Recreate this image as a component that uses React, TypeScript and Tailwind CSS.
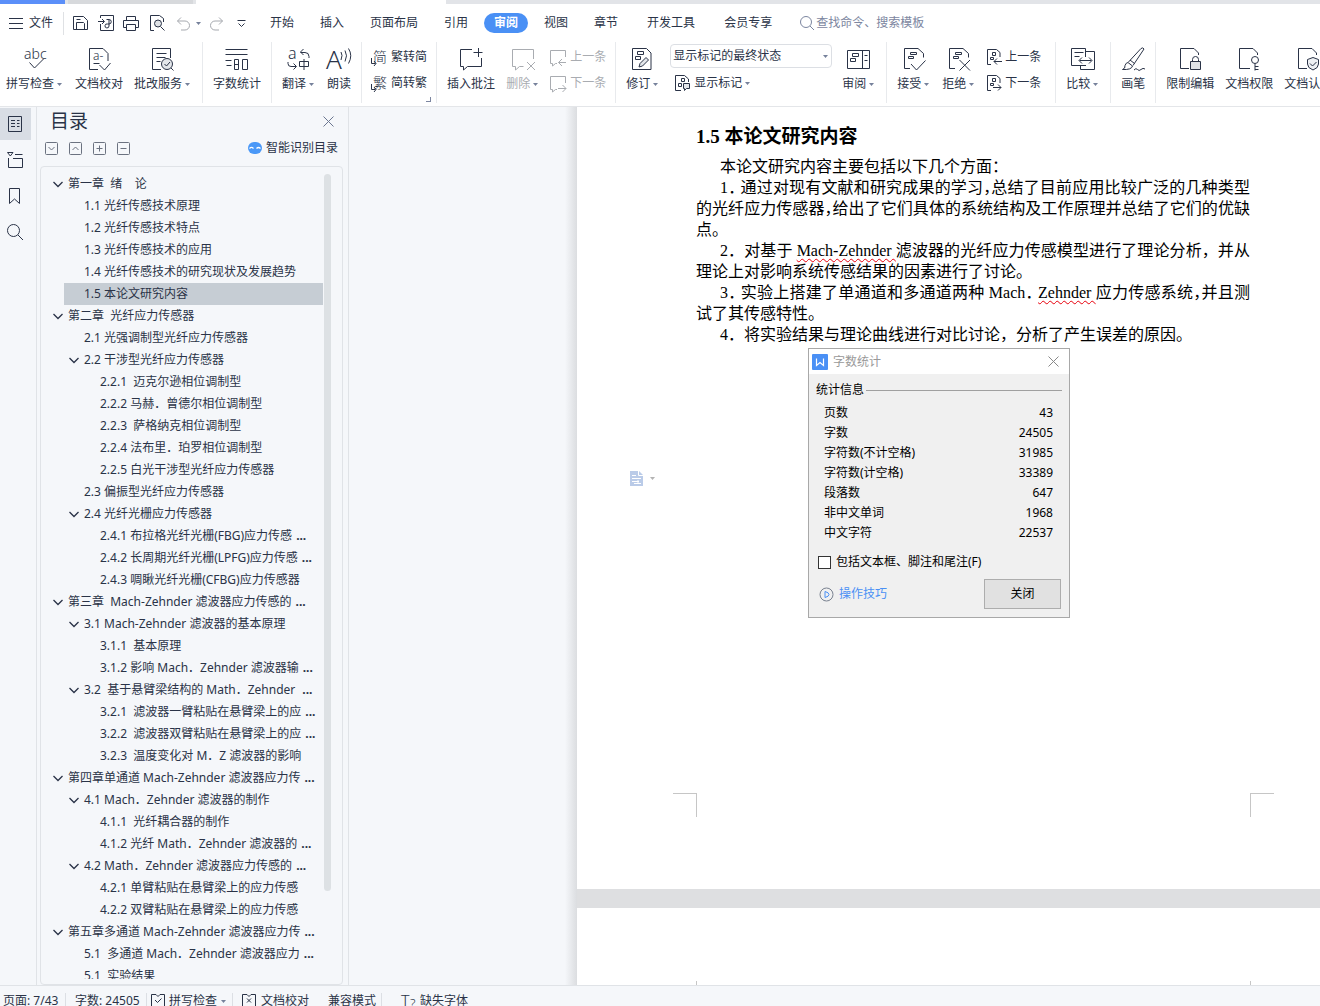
import { useState } from "react";
import type { ReactNode } from "react";

const INK = "text-[#2a3347]";

function Icon({ size = 24, children }: { size?: number; children: ReactNode }) {
  return (
    <svg
      width={size}
      height={size}
      viewBox={`0 0 ${size} ${size}`}
      fill="none"
      stroke="currentColor"
      strokeWidth={1}
      className="shrink-0 overflow-visible"
      aria-hidden="true"
    >
      {children}
    </svg>
  );
}

function GlyphText({ x, y, size, children }: { x: number; y: number; size: number; children: string }) {
  return (
    <text x={x} y={y} fontSize={size} fontWeight={300} fill="currentColor" stroke="none">
      {children}
    </text>
  );
}

function Caret() {
  return (
    <svg width="5" height="3" viewBox="0 0 5 3" className="shrink-0 text-[#76819b]" aria-hidden="true">
      <path d="M0 0h5L2.5 3z" fill="currentColor" />
    </svg>
  );
}

function Sep() {
  return <div className="ml-[5px] mr-1 mt-0.5 h-[61px] w-px shrink-0 bg-[#e8eaed]" />;
}

const pageShape = <path d="M8 21.500H2.500v-20h13.500l5.500 5v4" />;
const markBoxes = <path d="M8.500 5.500h6v2h-6zM6.500 9.500h5v2h-5z" />;

const icons = {
  spell: (
    <Icon>
      <GlyphText x={1} y={12} size={14}>abc</GlyphText>
      <path d="M6.500 15.500l5 5.500 9-9" />
    </Icon>
  ),
  proof: (
    <Icon>
      <path d="M11 22.500H2.500v-21h13.500l5 5V14" />
      <GlyphText x={6} y={13} size={12}>a-</GlyphText>
      <path d="M6.500 16.500h6M12.500 18l5 5 6-7" />
    </Icon>
  ),
  batch: (
    <Icon>
      <path d="M10 22.500H1.500v-21h18V11M5.500 6.500h10M5.500 10.500h9M5.500 14.500h4" />
      <circle cx="16" cy="17" r="5.500" fill="#e3e6ea" />
      <path d="M13.500 17l2 2 3.500-4M20 21l2.500 2.500" />
    </Icon>
  ),
  count: (
    <Icon>
      <path d="M.5 2.500h22M.5 7.500h22M.5 13.500h6M1.500 18.500h5M9.500 12.500h4v10h-4zM9.500 17.500h4M17.500 12.500h5v10h-5z" />
    </Icon>
  ),
  translate: (
    <Icon>
      <GlyphText x={1} y={12} size={16}>a</GlyphText>
      <path d="M16.500 2l-3 3 3 3M13.500 5.500h4.500a4 4 0 0 1 4 4V11M1 15v1.500a3 3 0 0 0 3 3h5M6.500 16.500l3 3-3 3" />
      <path d="M12.500 14.500h9v5h-9zM17 12v11" />
    </Icon>
  ),
  read: (
    <Icon>
      <GlyphText x={-1} y={22} size={26}>A</GlyphText>
      <path d="M14 5q2 3 0 8M18 3.500q3 5 0 11M21.500 1.500q4.500 7 0 15" />
    </Icon>
  ),
  insertNote: (
    <Icon>
      <path d="M13 2.500H1.500v17h3V23l4-3.500h14V11M14.500 5.500h9M19.500 1v9" />
    </Icon>
  ),
  deleteNote: (
    <Icon>
      <path d="M22.500 12V2.500H1.500v17h3V23l4-3.500h4M16 15l8 8M24 15l-8 8" />
    </Icon>
  ),
  revise: (
    <Icon>
      <path d="M1.500 1.500h14l4.500 4.500v16.500H1.500z" />
      <path d="M6.500 4.500h6v3h-6zM4.500 9.500h5v3h-5z" />
      <path d="M8 20l1-3.500 6-6 2.500 2.500-6 6z" fill="#e3e6ea" />
    </Icon>
  ),
  reviewPane: (
    <Icon>
      <path d="M.5 3.500h22v18H.5zM15.500 3.500v18M17.500 8.500h3M17.500 13.500h3M5.500 6.500h6v3h-6zM3.500 11.500h5v3h-5z" />
    </Icon>
  ),
  accept: (
    <Icon>
      {pageShape}
      {markBoxes}
      <path d="M9 17l5.500 6 9-9.500" />
    </Icon>
  ),
  reject: (
    <Icon>
      {pageShape}
      {markBoxes}
      <path d="M12.500 13l10.500 10.500M23 13L12.500 23.500" />
    </Icon>
  ),
  compare: (
    <Icon>
      <path d="M15 18.500H.5v-17h14V10M3.500 5.500h9M3.500 9.500h5M15 4.500h8.500v18h-14V19" />
      <path d="M8.500 13.500h12M11 10.500l-3 3 3 3M18 10.500l3 3-3 3" />
    </Icon>
  ),
  pen: (
    <Icon>
      <path d="M7.500 15L20 1.500q2-1.500 3 .5L12 18.500M7 15.500l4.500 3.500q-1 4-10 3.500 3-1 2.500-4 1-3 3-3zM9 13l4.500 3.500M13 23q2-2.500 3.500-.5t3.500 0 4-.5" />
    </Icon>
  ),
  lock: (
    <Icon>
      <path d="M11 21.500H2.500v-20h13.500l4.500 4.500v2M14.500 14.500v-2a3 3 0 0 1 6 0v2" />
      <path d="M12.500 14.500h10v8h-10z" fill="#dfe2e7" />
    </Icon>
  ),
  key: (
    <Icon>
      <path d="M13 21.500H2.500v-20h13.500l4.500 4.500v2M18 16.500v7M18 19.500h3.500M18 22.500h3.500" />
      <circle cx="18" cy="13" r="3.500" />
    </Icon>
  ),
  certify: (
    <Icon>
      <path d="M11 21.500H2.500v-20h13.500l4.500 4.500v2" />
      <path d="M17 10.500l5.500 2v4.500q0 4-5.500 6-5.500-2-5.500-6v-4.500z" fill="#eef0f3" />
      <path d="M14 16.500l2.500 2.500 4-4" />
    </Icon>
  ),
};

function BigButton({
  icon,
  label,
  caret = false,
  disabled = false,
}: {
  icon: ReactNode;
  label: string;
  caret?: boolean;
  disabled?: boolean;
}) {
  return (
    <button
      type="button"
      disabled={disabled}
      className="flex shrink-0 flex-col items-center pt-[7px] pr-[5px] pl-1.5 disabled:text-[#a9acb1]"
    >
      {icon}
      <span className="mt-[5px] flex h-4 items-center whitespace-nowrap leading-4">
        {label}
        {caret && (
          <span className="flex w-2.5 justify-center pl-px">
            <Caret />
          </span>
        )}
      </span>
    </button>
  );
}

function SmallButton({
  icon,
  label,
  caret = false,
  disabled = false,
}: {
  icon: ReactNode;
  label: string;
  caret?: boolean;
  disabled?: boolean;
}) {
  return (
    <button
      type="button"
      disabled={disabled}
      className="flex h-[26px] items-center gap-[3px] whitespace-nowrap pr-1 pl-[5px] disabled:text-[#a9acb1]"
    >
      {icon}
      {label}
      {caret && <Caret />}
    </button>
  );
}

function ConvertIcon({ char }: { char: string }) {
  return (
    <Icon size={17}>
      <GlyphText x={2} y={13} size={14}>{char}</GlyphText>
      <path d="M.5 9v5.500h4M3 12l2 2.500-2 2.500" />
    </Icon>
  );
}

function NoteStepIcon({ next = false }: { next?: boolean }) {
  return (
    <Icon size={17}>
      <path d="M15.500 8V1.500H.5v13h2V17l3-2.500h1.500" />
      {next ? <path d="M8 13.500h8M12.500 10l3.500 3.500-3.500 3.500" /> : <path d="M8.500 13.500h7.500M12 10l-3.500 3.500L12 17" />}
    </Icon>
  );
}

function ChangeStepIcon({ next = false }: { next?: boolean }) {
  return (
    <Icon size={16}>
      <path d="M5 15.500H1.500V.5h9l3.500 3V8M6.500 3.500h3v3h-3zM4.500 8.500h3v2h-3z" />
      {next ? <path d="M7 12.500h8M12 9.500l3 3-3 3" /> : <path d="M8 12.500h8M11 9.500l-3 3 3 3" />}
    </Icon>
  );
}

function TopStrip() {
  return (
    <div className="flex h-1 shrink-0">
      <div className="w-[65px] bg-[#5b8ff9]" />
      <div className="w-[3px] bg-[#e3e5e8]" />
      <div className="w-[125px] bg-[#d7d9dc]" />
      <div className="w-[3px] bg-[#e3e5e8]" />
      <div className="w-[250px] bg-white" />
      <div className="flex-1 bg-[#e2e4e8]" />
    </div>
  );
}

const tabs = ["开始", "插入", "页面布局", "引用", "审阅", "视图", "章节"];
const extraTabs = ["开发工具", "会员专享"];

function MenuBar() {
  const [active, setActive] = useState("审阅");

  return (
    <div className="flex h-9 shrink-0 items-center bg-white pt-0.5">
      <button type="button" className="flex w-[63px] shrink-0 items-center gap-1.5 pl-[9px]">
        <Icon size={14}>
          <path d="M0 2.500h14M0 7.500h14M0 12.500h14" />
        </Icon>
        文件
      </button>
      <div className="h-[23px] w-px shrink-0 bg-[#dfe1e4]" />
      <div className="flex w-[190px] shrink-0 items-center justify-between pr-2 pl-2">
        <button type="button" aria-label="保存">
          <Icon size={16}>
            <path d="M1.500 1.500h10l4 4v9h-14zM4.500 14.500v-7h7l1 1v6M4.500 4.500h4" />
          </Icon>
        </button>
        <button type="button" aria-label="输出为PDF">
          <Icon size={16}>
            <path d="M2.500 3V.5h13v15h-13V9M0 6.500h6M4 4l2.500 2.500L4 9M8.500 4.500h2.500a2 2 0 0 1 0 4.500H9.500a2 2 0 1 0 1.500 2V5" />
          </Icon>
        </button>
        <button type="button" aria-label="打印">
          <Icon size={16}>
            <path d="M3.500 5V1.500h9V5M3.500 12.500h-3v-7h15v7h-3M3.500 9.500h9v6h-9z" />
          </Icon>
        </button>
        <button type="button" aria-label="打印预览">
          <Icon size={16}>
            <path d="M5 15.500H1.500V.5h9l4 3V7M11.500 11.500l4 4" />
            <circle cx="9" cy="8.500" r="3.500" fill="#dfe2e6" />
          </Icon>
        </button>
        <button type="button" aria-label="撤销" className="flex items-center gap-1.5 pl-0.5 text-[#a6a9af]">
          <Icon size={13}>
            <path d="M4 .5l-3.500 3.500L4 7.500M.5 4h7.500a4.500 4.500 0 0 1 0 9H4" />
          </Icon>
          <Caret />
        </button>
        <button type="button" aria-label="恢复" className="text-[#a6a9af]">
          <Icon size={13}>
            <path d="M9 .5l3.500 3.500L9 7.500M12.500 4H5a4.500 4.500 0 0 0 0 9h4" />
          </Icon>
        </button>
        <button type="button" aria-label="自定义快速访问" className="pl-1">
          <Icon size={9}>
            <path d="M.5 1.500h8M1.500 4.500l3 3 3-3" />
          </Icon>
        </button>
      </div>
      <nav className="flex shrink-0 items-center gap-1.5 pl-1.5">
        {tabs.map((tab) => (
          <button
            key={tab}
            type="button"
            onClick={() => setActive(tab)}
            className={
              tab === active
                ? "h-5 rounded-full bg-[#4a90f5] px-2.5 font-bold text-white"
                : "h-5 px-2.5"
            }
          >
            {tab}
          </button>
        ))}
        {extraTabs.map((tab) => (
          <button key={tab} type="button" onClick={() => setActive(tab)} className="ml-[3px] h-5 px-2.5">
            {tab}
          </button>
        ))}
      </nav>
      <label className="ml-[18px] flex items-center gap-0.5 text-[#7c86a0]">
        <Icon size={14}>
          <circle cx="6" cy="6" r="5.500" />
          <path d="M10 10l4 4" />
        </Icon>
        <input
          type="text"
          aria-label="查找命令、搜索模板"
          placeholder="查找命令、搜索模板"
          className="w-40 bg-transparent outline-none placeholder:text-[#7c86a0]"
        />
      </label>
    </div>
  );
}

function Ribbon() {
  return (
    <div className="z-10 flex h-[67px] shrink-0 overflow-hidden border-b border-[#e4e6e9] bg-white">
      <BigButton icon={icons.spell} label="拼写检查" caret />
      <BigButton icon={icons.proof} label="文档校对" />
      <BigButton icon={icons.batch} label="批改服务" caret />
      <Sep />
      <BigButton icon={icons.count} label="字数统计" />
      <Sep />
      <BigButton icon={icons.translate} label="翻译" caret />
      <BigButton icon={icons.read} label="朗读" />
      <Sep />
      <div className="relative flex shrink-0 flex-col pt-1">
        <SmallButton icon={<ConvertIcon char="简" />} label="繁转简" />
        <SmallButton icon={<ConvertIcon char="繁" />} label="简转繁" />
        <span className="absolute right-0 bottom-1 h-[5px] w-[5px] border-r border-b border-[#7c86a0]" />
      </div>
      <Sep />
      <BigButton icon={icons.insertNote} label="插入批注" />
      <BigButton icon={icons.deleteNote} label="删除" caret disabled />
      <div className="flex shrink-0 flex-col pt-1">
        <SmallButton icon={<NoteStepIcon />} label="上一条" disabled />
        <SmallButton icon={<NoteStepIcon next />} label="下一条" disabled />
      </div>
      <Sep />
      <BigButton icon={icons.revise} label="修订" caret />
      <div className="flex w-[171px] shrink-0 flex-col pt-1 pl-[5px]">
        <div className="relative w-[162px]">
          <select
            aria-label="显示标记状态"
            className="block h-6 w-full appearance-none rounded-sm border border-[#dcdfe4] bg-white pl-0.5"
          >
            <option>显示标记的最终状态</option>
          </select>
          <span className="pointer-events-none absolute top-2.5 right-1 flex h-[5px] items-center">
            <Caret />
          </span>
        </div>
        <div className="mt-0.5">
          <SmallButton
            icon={
              <Icon size={16}>
                <path d="M6 15.500H.5V.5h9l4 3.500V7M6.500 3.500h3v3h-3zM3.500 8.500h3v3h-3z" />
                <path d="M8.500 8.500h6v5h-3L9.500 15.500v-2h-1z" fill="#e3e6ea" />
              </Icon>
            }
            label="显示标记"
            caret
          />
        </div>
      </div>
      <BigButton icon={icons.reviewPane} label="审阅" caret />
      <Sep />
      <BigButton icon={icons.accept} label="接受" caret />
      <BigButton icon={icons.reject} label="拒绝" caret />
      <div className="flex shrink-0 flex-col pt-1 pr-[5px]">
        <SmallButton icon={<ChangeStepIcon />} label="上一条" />
        <SmallButton icon={<ChangeStepIcon next />} label="下一条" />
      </div>
      <Sep />
      <BigButton icon={icons.compare} label="比较" caret />
      <Sep />
      <BigButton icon={icons.pen} label="画笔" />
      <Sep />
      <BigButton icon={icons.lock} label="限制编辑" />
      <BigButton icon={icons.key} label="文档权限" />
      <BigButton icon={icons.certify} label="文档认证" />
    </div>
  );
}

const railButton = "flex h-8 w-[31px] items-center justify-center pr-px";

function SideRail() {
  return (
    <div className="flex w-9 shrink-0 flex-col gap-1 pt-px">
      <button type="button" aria-label="目录" className={`${railButton} bg-[#d8dde4]`}>
        <Icon size={16}>
          <path d="M1.500.5h13v15h-13zM4 4.500h4M4 7.500h4M4 10.500h4M10 4.500h2.500M10 7.500h2.500M10 10.500h2.500" />
        </Icon>
      </button>
      <button type="button" aria-label="章节" className={railButton}>
        <Icon size={16}>
          <path d="M.5.500h5.500L3.300 4zM8 2.500h7.500M1.500 6v9.500h14v-9H6" />
        </Icon>
      </button>
      <button type="button" aria-label="书签" className={railButton}>
        <Icon size={16}>
          <path d="M2.500.5h10v15l-5-4.500-5 4.500z" />
        </Icon>
      </button>
      <button type="button" aria-label="查找" className={railButton}>
        <Icon size={16}>
          <circle cx="6.500" cy="6.500" r="6" />
          <path d="M11 11l5 5" />
        </Icon>
      </button>
    </div>
  );
}

type TreeItem = { level: number; text: string; open?: boolean; cut?: boolean };

const outline: TreeItem[] = [
  { level: 0, text: "第一章  绪    论", open: true },
  { level: 1, text: "1.1 光纤传感技术原理" },
  { level: 1, text: "1.2 光纤传感技术特点" },
  { level: 1, text: "1.3 光纤传感技术的应用" },
  { level: 1, text: "1.4 光纤传感技术的研究现状及发展趋势" },
  { level: 1, text: "1.5 本论文研究内容" },
  { level: 0, text: "第二章  光纤应力传感器", open: true },
  { level: 1, text: "2.1 光强调制型光纤应力传感器" },
  { level: 1, text: "2.2 干涉型光纤应力传感器", open: true },
  { level: 2, text: "2.2.1  迈克尔逊相位调制型" },
  { level: 2, text: "2.2.2 马赫．曾德尔相位调制型" },
  { level: 2, text: "2.2.3  萨格纳克相位调制型" },
  { level: 2, text: "2.2.4 法布里．珀罗相位调制型" },
  { level: 2, text: "2.2.5 白光干涉型光纤应力传感器" },
  { level: 1, text: "2.3 偏振型光纤应力传感器" },
  { level: 1, text: "2.4 光纤光栅应力传感器", open: true },
  { level: 2, text: "2.4.1 布拉格光纤光栅(FBG)应力传感", cut: true },
  { level: 2, text: "2.4.2 长周期光纤光栅(LPFG)应力传感", cut: true },
  { level: 2, text: "2.4.3 啁瞅光纤光栅(CFBG)应力传感器" },
  { level: 0, text: "第三章  Mach-Zehnder 滤波器应力传感的", open: true, cut: true },
  { level: 1, text: "3.1 Mach-Zehnder 滤波器的基本原理", open: true },
  { level: 2, text: "3.1.1  基本原理" },
  { level: 2, text: "3.1.2 影响 Mach．Zehnder 滤波器输", cut: true },
  { level: 1, text: "3.2  基于悬臂梁结构的 Math．Zehnder ", open: true, cut: true },
  { level: 2, text: "3.2.1  滤波器一臂粘贴在悬臂梁上的应", cut: true },
  { level: 2, text: "3.2.2  滤波器双臂粘贴在悬臂梁上的应", cut: true },
  { level: 2, text: "3.2.3  温度变化对 M．Z 滤波器的影响" },
  { level: 0, text: "第四章单通道 Mach-Zehnder 滤波器应力传", open: true, cut: true },
  { level: 1, text: "4.1 Mach．Zehnder 滤波器的制作", open: true },
  { level: 2, text: "4.1.1  光纤耦合器的制作" },
  { level: 2, text: "4.1.2 光纤 Math．Zehnder 滤波器的", cut: true },
  { level: 1, text: "4.2 Math．Zehnder 滤波器应力传感的", open: true, cut: true },
  { level: 2, text: "4.2.1 单臂粘贴在悬臂梁上的应力传感" },
  { level: 2, text: "4.2.2 双臂粘贴在悬臂梁上的应力传感" },
  { level: 0, text: "第五章多通道 Mach-Zehnder 滤波器应力传", open: true, cut: true },
  { level: 1, text: "5.1  多通道 Mach．Zehnder 滤波器应力", cut: true },
  { level: 1, text: "5.1  实验结果" },
];

const indents = ["pl-0", "pl-4", "pl-8"];

function OutlineTree() {
  const [selected, setSelected] = useState(5);

  return (
    <div className="ml-[3px] mr-[5px] flex min-h-0 flex-1 overflow-hidden rounded-sm border border-[#e0e3e7] pb-[5px]">
      <ul className="min-h-0 flex-1 overflow-hidden pt-1.5 pl-3">
        {outline.map((item, i) => (
          <li key={i} className={indents[item.level]}>
            <button
              type="button"
              onClick={() => setSelected(i)}
              className="flex h-[22px] w-full items-center text-left whitespace-pre"
            >
              <span className="flex w-[11px] shrink-0">
                {item.open && (
                  <Icon size={10}>
                    <path d="M.5 3l4.500 4.500L9.500 3" strokeWidth="1.300" />
                  </Icon>
                )}
              </span>
              <span
                className={
                  i === selected
                    ? "-ml-4 flex h-[22px] flex-1 items-center bg-[#c6cdd4] pl-5"
                    : "flex flex-1 items-center pl-1"
                }
              >
                {item.text}
                {item.cut && <b className="pl-1">...</b>}
              </span>
            </button>
          </li>
        ))}
      </ul>
      <div className="mt-[7px] mr-[11px] mb-[88px] ml-px w-[7px] shrink-0 rounded-full bg-[#dde1e4]" />
    </div>
  );
}

function OutlinePanel() {
  return (
    <aside className="flex w-[313px] shrink-0 flex-col border-x border-[#e0e3e7]">
      <div className="flex h-7 items-center justify-between pr-[14px] pl-[13px]">
        <h2 className="text-[19px] leading-7">目录</h2>
        <button type="button" aria-label="关闭目录" className="text-[#6b7690]">
          <Icon size={11}>
            <path d="M.5.5l10 10M10.500.5l-10 10" />
          </Icon>
        </button>
      </div>
      <div className="mb-[5px] flex h-[26px] items-center gap-[11px] pr-2.5 pl-2">
        <button type="button" aria-label="展开" className="text-[#6b7280]">
          <Icon size={13}>
            <rect x=".5" y=".5" width="12" height="12" rx="1" />
            <path d="M3.500 5l3 3 3-3" />
          </Icon>
        </button>
        <button type="button" aria-label="收起" className="text-[#6b7280]">
          <Icon size={13}>
            <rect x=".5" y=".5" width="12" height="12" rx="1" />
            <path d="M3.500 8l3-3 3 3" />
          </Icon>
        </button>
        <button type="button" aria-label="增加级别" className="text-[#6b7280]">
          <Icon size={13}>
            <rect x=".5" y=".5" width="12" height="12" rx="1" />
            <path d="M3.500 6.500h6M6.500 3.500v6" />
          </Icon>
        </button>
        <button type="button" aria-label="降低级别" className="text-[#6b7280]">
          <Icon size={13}>
            <rect x=".5" y=".5" width="12" height="12" rx="1" />
            <path d="M3.500 6.500h6" />
          </Icon>
        </button>
        <button type="button" className="ml-auto flex items-center gap-1">
          <svg width="14" height="12" viewBox="0 0 14 12" aria-hidden="true">
            <rect width="14" height="12" rx="6" fill="#4a98f7" />
            <path d="M1.500 6.500q2-2 4 0M8.500 6.500q2-2 4 0" fill="none" stroke="#fff" strokeWidth="1.200" />
          </svg>
          智能识别目录
        </button>
      </div>
      <OutlineTree />
    </aside>
  );
}

const stats: [string, string][] = [
  ["页数", "43"],
  ["字数", "24505"],
  ["字符数(不计空格)", "31985"],
  ["字符数(计空格)", "33389"],
  ["段落数", "647"],
  ["非中文单词", "1968"],
  ["中文字符", "22537"],
];

function WordCountDialog() {
  const [include, setInclude] = useState(false);

  return (
    <div
      role="dialog"
      aria-label="字数统计"
      className="absolute top-[241px] left-[231px] w-[262px] border border-[#a8a8a8] bg-[#f0f0f0] text-black"
    >
      <div className="flex h-[25px] items-center bg-white pr-2.5 pl-[3px]">
        <svg width="16" height="16" viewBox="0 0 16 16" aria-hidden="true">
          <rect width="16" height="16" rx="1" fill="#4a90f5" />
          <path d="M4.500 4.500v7l3.500-3 3.500 3v-7" fill="none" stroke="#fff" strokeWidth="1.200" />
        </svg>
        <span className="flex-1 pl-[5px] text-[#999]">字数统计</span>
        <button type="button" aria-label="关闭窗口" className="text-[#888]">
          <Icon size={11}>
            <path d="M.5.5l10 10M10.500.5l-10 10" />
          </Icon>
        </button>
      </div>
      <div className="flex h-[29px] items-center gap-0.5 pt-[3px] pr-[7px] pl-[7px]">
        统计信息
        <div className="h-px flex-1 bg-[#a0a0a0]" />
      </div>
      <table className="w-full">
        <tbody>
          {stats.map(([name, value]) => (
            <tr key={name} className="h-5">
              <th scope="row" className="p-0 pl-[15px] text-left font-normal">{name}</th>
              <td className="p-0 pr-4 text-right">{value}</td>
            </tr>
          ))}
        </tbody>
      </table>
      <label className="mt-[9px] flex h-5 items-center gap-[5px] pl-[9px]">
        <input
          type="checkbox"
          checked={include}
          onChange={(e) => setInclude(e.target.checked)}
          className="h-[13px] w-[13px] appearance-none border border-[#333] bg-white checked:bg-[#4a90f5]"
        />
        包括文本框、脚注和尾注(F)
      </label>
      <div className="mt-[7px] mb-2 flex items-center justify-between pr-2 pl-2.5">
        <a href="#tips" className="flex items-center gap-[5px] text-[#4a90f5]">
          <Icon size={15}>
            <circle cx="7.500" cy="7.500" r="6.500" stroke="#7a8290" />
            <path d="M6 4.500v6q4-1 4-3t-4-3z" />
          </Icon>
          操作技巧
        </a>
        <button type="button" className="h-[30px] w-[77px] border border-[#adadad] bg-[#e1e1e1]">
          关闭
        </button>
      </div>
    </div>
  );
}

// half-width punctuation inside the body text
function Half({ children }: { children: string }) {
  return <span className="[font-feature-settings:'halt']">{children}</span>;
}

function Misspelled({ children }: { children: string }) {
  return (
    <span className="underline decoration-red-600 decoration-wavy decoration-1 underline-offset-2">{children}</span>
  );
}

const fullLine = "whitespace-nowrap [text-align-last:justify]";

function DocumentArea() {
  return (
    <main className="flex min-w-0 flex-1">
      <div className="flex w-[228px] shrink-0 justify-end">
        <div className="w-3 bg-gradient-to-r from-[#f5f7fa] to-[#dbdde0]" />
      </div>
      <div className="flex min-w-0 flex-1 flex-col bg-[#dedfe1]">
        <section className="relative flex min-h-0 flex-1 flex-col bg-white">
          <article className="pt-4 pr-[70px] pl-[119px] font-['Liberation_Serif','Noto_Sans_CJK_SC',serif] text-base leading-[21px] text-black">
            <h1 className="mb-[5px] text-[19px] leading-7 font-bold">1.5 本论文研究内容</h1>
            <p className="pl-6">本论文研究内容主要包括以下几个方面：</p>
            <p className={`pl-6 ${fullLine}`}>
              1<Half>．</Half> 通过对现有文献和研究成果的学习<Half>，</Half>总结了目前应用比较广泛的几种类型
            </p>
            <p className={fullLine}>
              的光纤应力传感器<Half>，</Half>给出了它们具体的系统结构及工作原理并总结了它们的优缺
            </p>
            <p>点。</p>
            <p className={`pl-6 ${fullLine}`}>
              2．对基于 <Misspelled>Mach-Zehnder </Misspelled>滤波器的光纤应力传感模型进行了理论分析，并从
            </p>
            <p>理论上对影响系统传感结果的因素进行了讨论。</p>
            <p className={`pl-6 ${fullLine}`}>
              3<Half>．</Half> 实验上搭建了单通道和多通道两种 Mach<Half>．</Half> <Misspelled>Zehnder </Misspelled>
              应力传感系统<Half>，</Half>并且测
            </p>
            <p>试了其传感特性。</p>
            <p className="pl-6">4．将实验结果与理论曲线进行对比讨论，分析了产生误差的原因。</p>
          </article>
          <div className="mt-auto flex justify-between pr-[46px] pb-[72px] pl-24">
            <div className="h-6 w-6 border-t border-r border-[#c6c6c6]" />
            <div className="h-6 w-6 border-t border-l border-[#c6c6c6]" />
          </div>
          <button
            type="button"
            aria-label="段落布局"
            className="absolute top-[364px] left-[53px] flex items-center gap-[7px] text-[#b3b3b3]"
          >
            <svg width="13" height="15" viewBox="0 0 13 15" aria-hidden="true">
              <path d="M0 0h9l4 4v11H0z" fill="#bacbe8" />
              <path d="M8.500 0v4.500H13M2 4.500h4M2 7.500h9M2 10.500h7M4 12.500h7M8 9v3" fill="none" stroke="#fff" />
            </svg>
            <svg width="5" height="3" viewBox="0 0 5 3" aria-hidden="true">
              <path d="M0 0h5L2.500 3z" fill="currentColor" />
            </svg>
          </button>
          <WordCountDialog />
        </section>
        <section className="mt-[19px] flex h-[77px] shrink-0 items-end justify-between bg-white pr-[69px] pl-[119px]">
          <div className="h-1 w-px bg-[#c6c6c6]" />
          <div className="h-1 w-px bg-[#c6c6c6]" />
        </section>
      </div>
    </main>
  );
}

function StatusSep() {
  return <div className="h-4 w-px shrink-0 bg-[#dcdfe4]" />;
}

function StatusBar() {
  return (
    <footer className="h-[21px] shrink-0 overflow-hidden border-t border-[#e0e3e7]">
      <div className="flex h-[30px] items-center whitespace-nowrap">
        <span className="w-[65px] pl-[3px]">页面: 7/43</span>
        <StatusSep />
        <span className="w-20 pl-[9px]">字数: 24505</span>
        <StatusSep />
        <button type="button" className="flex w-[85px] items-center gap-1 pl-1">
          <Icon size={14}>
            <path d="M5 .500H.5v12h13V.5H9M5 .500l2 2 2-2M4 6l2.500 2.500L10.500 4.500" />
          </Icon>
          拼写检查
          <Caret />
        </button>
        <StatusSep />
        <button type="button" className="flex w-[77px] items-center gap-[5px] pl-[9px]">
          <Icon size={14}>
            <path d="M5 .500H.5v12h13V.5H9M5 .500l2 2 2-2M5 4.500l4 4M9 4.500l-4 4" />
          </Icon>
          文档校对
        </button>
        <span className="w-[71px] pl-[18px]">兼容模式</span>
        <StatusSep />
        <button type="button" className="flex items-center gap-1 pl-[19px]">
          <Icon size={15}>
            <GlyphText x={0} y={13} size={16}>T</GlyphText>
            <GlyphText x={9} y={14} size={13}>?</GlyphText>
          </Icon>
          缺失字体
        </button>
      </div>
    </footer>
  );
}

export default function App() {
  return (
    <div
      className={`flex h-screen flex-col overflow-hidden bg-[#f5f7fa] font-['Noto_Sans','Noto_Sans_CJK_SC',sans-serif] text-xs ${INK}`}
    >
      <TopStrip />
      <MenuBar />
      <Ribbon />
      <div className="flex min-h-0 flex-1">
        <SideRail />
        <OutlinePanel />
        <DocumentArea />
      </div>
      <StatusBar />
    </div>
  );
}
